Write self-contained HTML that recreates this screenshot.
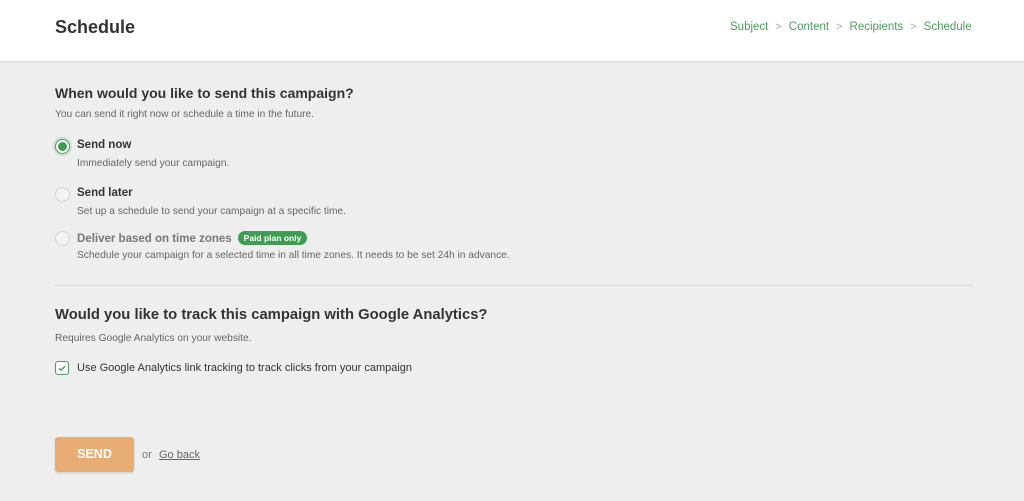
<!DOCTYPE html>
<html><head><style>
body{margin:0;width:1024px;height:501px;background:#eeeeee;font-family:"Liberation Sans",sans-serif;color:#333;position:relative;overflow:hidden}
.hdr{position:absolute;left:0;top:0;width:1024px;height:61px;background:#fff;border-bottom:1px solid #e0e0e0;box-shadow:0 1px 2px rgba(0,0,0,.05)}
.abs{position:absolute;white-space:nowrap}
.t{font-weight:bold;font-size:18px;color:#333}
.crumb{font-size:11.5px;color:#4a9d5b}
.sep{color:#aaa;font-size:11px;margin:0 7px}
h2{margin:0;font-size:14.5px;font-weight:bold;color:#333}
.sub{font-size:10.2px;color:#666}
.lbl{font-size:11.5px;font-weight:bold;color:#333}
.radio{position:absolute;width:13px;height:13px;border-radius:50%;border:1px solid #d3d3d3;background:#f3f3f3}
.badge{display:inline-block;background:#3e9d52;color:#fff;font-size:8.5px;font-weight:bold;padding:2px 6px;border-radius:8px;margin-left:6px;vertical-align:1px}
</style></head><body>
<div class="hdr"></div>
<div class="abs t" style="left:55px;top:17px">Schedule</div>
<div class="abs crumb" style="left:730px;top:21px">Subject<span class="sep">&gt;</span>Content<span class="sep">&gt;</span>Recipients<span class="sep">&gt;</span>Schedule</div>

<div class="abs" style="left:55px;top:85px"><h2 style="font-size:14px">When would you like to send this campaign?</h2></div>
<div class="abs sub" style="left:55px;top:109px">You can send it right now or schedule a time in the future.</div>

<div class="radio" style="left:55px;top:139px;border:1px solid #4a9d5b;background:#fff;box-shadow:0 0 0 2px rgba(74,157,91,.2)"><div style="position:absolute;left:2px;top:2px;width:9px;height:9px;border-radius:50%;background:#3e9d52"></div></div>
<div class="abs lbl" style="left:77px;top:139px">Send now</div>
<div class="abs sub" style="left:77px;top:158px">Immediately send your campaign.</div>

<div class="radio" style="left:55px;top:187px"></div>
<div class="abs lbl" style="left:77px;top:187px">Send later</div>
<div class="abs sub" style="left:77px;top:206px">Set up a schedule to send your campaign at a specific time.</div>

<div class="radio" style="left:55px;top:231px"></div>
<div class="abs lbl" style="left:77px;top:231px;color:#777">Deliver based on time zones<span class="badge">Paid plan only</span></div>
<div class="abs sub" style="left:77px;top:250px">Schedule your campaign for a selected time in all time zones. It needs to be set 24h in advance.</div>

<div class="abs" style="left:55px;top:285px;width:918px;height:1px;background:#dcdcdc"></div>

<div class="abs" style="left:55px;top:307px"><h2 style="font-size:14.8px">Would you like to track this campaign with Google Analytics?</h2></div>
<div class="abs sub" style="left:55px;top:333px">Requires Google Analytics on your website.</div>
<div class="abs" style="left:55px;top:361px;width:12px;height:12px;border:1.5px solid #4a9d5b;border-radius:3px;background:#fff">
<svg width="12" height="12" viewBox="0 0 12 12" style="position:absolute;left:0;top:0"><path d="M3 6.2 L5.2 8.3 L9 4" fill="none" stroke="#4a9d5b" stroke-width="1.4"/></svg></div>
<div class="abs" style="left:77px;top:362px;font-size:11px;color:#333">Use Google Analytics link tracking to track clicks from your campaign</div>

<div class="abs" style="left:55px;top:437px;width:79px;height:35px;background:#e8ad74;border-radius:3px;box-shadow:0 1px 2px rgba(0,0,0,.15);color:#fff;font-weight:bold;font-size:12.5px;text-align:center;line-height:35px">SEND</div>
<div class="abs" style="left:142px;top:449px;font-size:11px;color:#777">or</div>
<div class="abs" style="left:159px;top:449px;font-size:11px;color:#666;text-decoration:underline">Go back</div>
</body></html>
